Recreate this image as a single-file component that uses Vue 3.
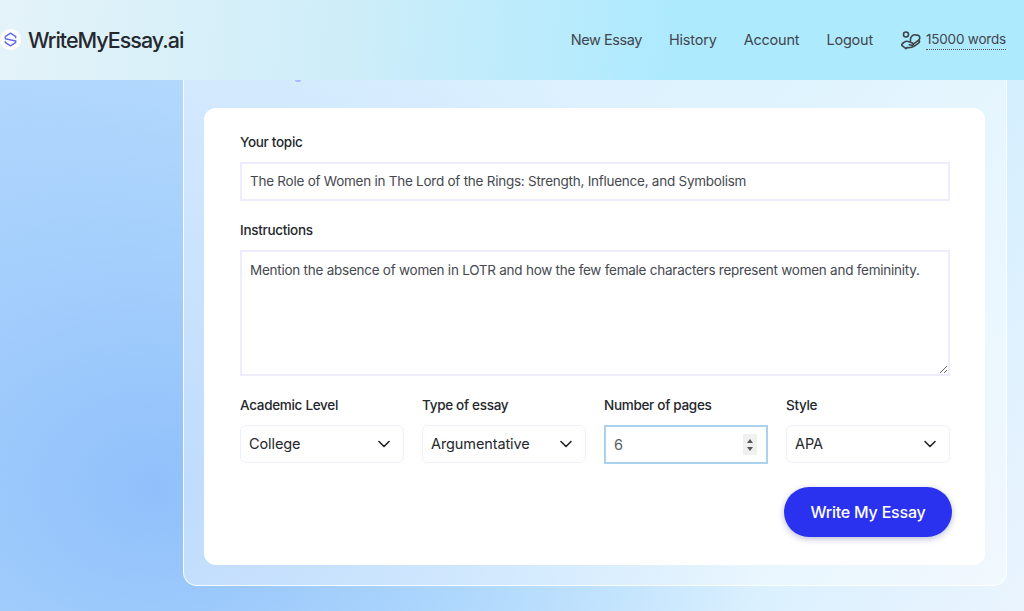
<template>
  <div class="page">
    <header class="topbar">
      <a class="brand">
        <span class="brand-mark">
          <svg viewBox="0 0 22 22" fill="none" stroke-linejoin="round" stroke-linecap="round">
            <path stroke="#5f67f2" stroke-width="1.400" d="M16.500 9.200V8L11 4.300 5.500 8v2.200l11 2.400V14L11 17.700 5.500 14v-1" />
          </svg>
        </span>
        <span class="brand-name">WriteMyEssay.ai</span>
      </a>
      <nav class="nav">
        <a v-for="link in links" :key="link">{{ link }}</a>
        <span class="words">
          <svg class="words-icon" viewBox="1 0 22 24" fill="none" stroke="#3d4148" stroke-width="1.700" stroke-linecap="round" stroke-linejoin="round">
            <circle cx="6.500" cy="6" r="2.800" />
            <path d="M11.500 13C10.500 8.500 15 5 18 6.800c3-1 4.800 2.700 2.700 5.200" />
            <path d="M3 15.500c2-2 5-2.500 7-1.500l3.500 1.200c1.500.5 1.500 2.800-.5 2.600l-3-.6" />
            <path d="M14.500 16.500l6-4.300c1.500 1 1 2.300 0 3-3 2.500-7 6-13 5.300" />
            <path d="M3 15.500 1.500 17.500l5 4 1.500-1.500" />
          </svg>
          <span class="words-count">15000 words</span>
        </span>
      </nav>
    </header>

    <main class="content">
      <section class="panel">
        <span class="peek"></span>
        <form class="card" @submit.prevent>
          <label class="field">
            <span class="label">Your topic</span>
            <input class="text-input" type="text" v-model="topic" />
          </label>
          <label class="field">
            <span class="label">Instructions</span>
            <textarea class="text-input area" v-model="instructions"></textarea>
          </label>
          <div class="options">
            <label class="option">
              <span class="label">Academic Level</span>
              <select class="select" v-model="level">
                <option>College</option>
              </select>
            </label>
            <label class="option">
              <span class="label">Type of essay</span>
              <select class="select" v-model="essayType">
                <option>Argumentative</option>
              </select>
            </label>
            <label class="option">
              <span class="label">Number of pages</span>
              <span class="number-wrap">
                <input class="number" type="number" v-model="pages" />
                <span class="spin"><i class="up"></i><i class="down"></i></span>
              </span>
            </label>
            <label class="option">
              <span class="label">Style</span>
              <select class="select" v-model="style">
                <option>APA</option>
              </select>
            </label>
          </div>
          <div class="actions">
            <button class="submit" type="submit">Write My Essay</button>
          </div>
        </form>
      </section>
    </main>
  </div>
</template>

<script setup>
import { ref } from 'vue'

const links = ['New Essay', 'History', 'Account', 'Logout']

const topic = ref('The Role of Women in The Lord of the Rings: Strength, Influence, and Symbolism')
const instructions = ref('Mention the absence of women in LOTR and how the few female characters represent women and femininity.')
const level = ref('College')
const essayType = ref('Argumentative')
const pages = ref(6)
const style = ref('APA')
</script>

<style>
html,
body {
  margin: 0;
  height: 100%;
  overflow: hidden;
}
</style>

<style scoped>
.page {
  height: 611px;
  font-family: Inter, "Noto Sans", sans-serif;
  color: #24272c;
  background:
    radial-gradient(ellipse 620px 520px at 15% 80%, #90c0fb 0%, rgba(144, 192, 251, 0) 100%),
    linear-gradient(125deg, #b6dafd 0%, #c9ecfe 60%, #eaf4fe 100%);
}

.topbar {
  height: 80px;
  display: flex;
  align-items: center;
  justify-content: space-between;
  padding-right: 18px;
  background: linear-gradient(95deg, #e4f3f9 0%, #cdedf9 35%, #aeeafe 65%, #aeeafe 100%);
}

.brand {
  display: flex;
  align-items: center;
  gap: 7px;
}

.brand-mark {
  width: 21px;
  height: 21px;
  margin-top: -2px;
  border-radius: 50%;
  background: #fff;
  display: flex;
}

.brand-mark svg {
  width: 21px;
  height: 21px;
}

.brand-name {
  font-size: 21.5px;
  font-weight: 500;
  letter-spacing: -1px;
  color: #25282e;
}

.nav {
  display: flex;
  align-items: center;
  gap: 27px;
  margin-top: -2px;
  font-size: 14.5px;
  letter-spacing: -0.2px;
  color: #41454c;
}

.nav a:first-child {
  letter-spacing: -0.45px;
}

.words {
  display: flex;
  align-items: center;
  gap: 5px;
  margin: 2px 0 0 1px;
}

.words-icon {
  width: 20px;
  height: 22px;
}

.words-count {
  font-size: 13.5px;
  letter-spacing: -0.2px;
  padding-bottom: 2px;
  border-bottom: 1px dotted #555;
}

.content {
  padding: 0 17px 0 183px;
}

.panel {
  position: relative;
  height: 506px;
  box-sizing: border-box;
  padding: 28px 21px 20px 20px;
  background: rgba(255, 255, 255, 0.42);
  border: 1px solid rgba(255, 255, 255, 0.85);
  border-top: 0;
  border-radius: 0 0 14px 14px;
}

.peek {
  position: absolute;
  top: 0;
  left: 111px;
  width: 6px;
  height: 2px;
  border-radius: 0 0 3px 3px;
  background: #a9b8fb;
}

.card {
  height: 457px;
  box-sizing: border-box;
  padding: 24px 35px 0 36px;
  background: #fff;
  border-radius: 12px;
}

.field {
  display: block;
  margin-bottom: 19px;
}

.label {
  display: block;
  font-size: 13.5px;
  line-height: 20px;
  font-weight: 500;
  letter-spacing: -0.3px;
  color: #24272c;
  margin-bottom: 10px;
}

.text-input {
  display: block;
  width: 100%;
  height: 39px;
  box-sizing: border-box;
  padding: 0 8px 1px;
  border: 2px solid #ededfd;
  outline: none;
  font: inherit;
  font-size: 13.5px;
  letter-spacing: -0.25px;
  color: #45494f;
  background: #fff;
}

.area {
  height: 126px;
  padding: 8px;
  line-height: 20px;
  resize: vertical;
}

.options {
  display: grid;
  grid-template-columns: repeat(4, 164px);
  gap: 18px;
}

.select {
  display: block;
  width: 100%;
  height: 38px;
  box-sizing: border-box;
  padding: 0 8px 2px;
  border: 1px solid #efeefe;
  border-radius: 6px;
  outline: none;
  appearance: none;
  font: inherit;
  font-size: 14.5px;
  letter-spacing: -0.1px;
  color: #24272c;
  background: #fff url("data:image/svg+xml,%3Csvg xmlns='http://www.w3.org/2000/svg' width='12' height='8' fill='none' stroke='%23222' stroke-width='1.6' stroke-linecap='round' stroke-linejoin='round'%3E%3Cpath d='M1 1.500 6 6.500l5-5'/%3E%3C/svg%3E") no-repeat right 13px center;
}

.number-wrap {
  display: block;
  position: relative;
}

.number {
  display: block;
  width: 100%;
  height: 39px;
  box-sizing: border-box;
  padding: 0 8px;
  border: 2px solid #a9d3ec;
  outline: none;
  appearance: textfield;
  font: inherit;
  font-size: 14.5px;
  color: #5b5f65;
  background: #fff;
}

.number::-webkit-inner-spin-button {
  appearance: none;
}

.spin {
  position: absolute;
  top: 9px;
  right: 11px;
  width: 14px;
  height: 21px;
  background: #f0f0f0;
}

.spin i {
  position: absolute;
  left: 4px;
  border-left: 3px solid transparent;
  border-right: 3px solid transparent;
}

.spin .up {
  top: 5px;
  border-bottom: 4px solid #555;
}

.spin .down {
  bottom: 4px;
  border-top: 4px solid #555;
}

.actions {
  display: flex;
  justify-content: flex-end;
  margin: 23px -2px 0 0;
}

.submit {
  width: 168px;
  height: 50px;
  border: 0;
  border-radius: 25px;
  font: inherit;
  font-size: 16px;
  font-weight: 500;
  letter-spacing: -0.2px;
  color: #fff;
  background: #2b32ef;
  box-shadow: 0 2px 6px rgba(30, 40, 120, 0.3);
}
</style>
